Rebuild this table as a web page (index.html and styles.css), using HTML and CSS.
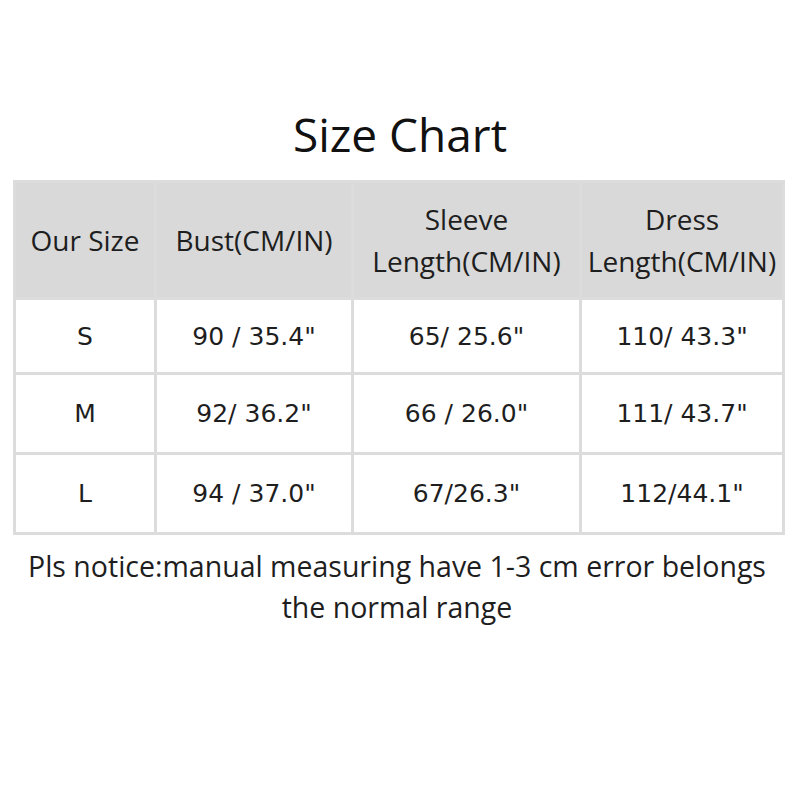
FILE: index.html
```html
<!DOCTYPE html>
<html>
<head>
<meta charset="utf-8">
<link rel="stylesheet" href="styles.css">
</head>
<body>
<div class="page">
  <h1 class="title">Size Chart</h1>
  <table class="chart">
    <colgroup>
      <col class="c1"><col class="c2"><col class="c3"><col class="c4">
    </colgroup>
    <thead>
      <tr>
        <th>Our Size</th>
        <th>Bust(CM/IN)</th>
        <th>Sleeve<br>Length(CM/IN)</th>
        <th>Dress<br>Length(CM/IN)</th>
      </tr>
    </thead>
    <tbody>
      <tr class="r1"><td>S</td><td>90 / 35.4"</td><td>65/ 25.6"</td><td>110/ 43.3"</td></tr>
      <tr class="r2"><td>M</td><td>92/ 36.2"</td><td>66 / 26.0"</td><td>111/ 43.7"</td></tr>
      <tr class="r3"><td>L</td><td>94 / 37.0"</td><td>67/26.3"</td><td>112/44.1"</td></tr>
    </tbody>
  </table>
  <p class="note">Pls notice:manual measuring have 1-3 cm error belongs<br>the normal range</p>
</div>
</body>
</html>
```
FILE: styles.css
```css
html, body {
  margin: 0;
  padding: 0;
  background: #ffffff;
}
.page {
  width: 800px;
  height: 800px;
  padding-top: 104px;
  box-sizing: border-box;
  font-family: "Open Sans", sans-serif;
  color: #1a1a1a;
}
.title {
  margin: 0;
  text-align: center;
  font-weight: 400;
  font-size: 46px;
  line-height: 60px;
  color: #111;
}
.chart {
  margin: 16px 0 0 13px;
  width: 769px;
  border-collapse: collapse;
  table-layout: fixed;
}
.c1 { width: 141px; }
.c2 { width: 197px; }
.c3 { width: 228px; }
.c4 { width: 203px; }
.chart th, .chart td {
  border: 3px solid #dcdcdc;
  text-align: center;
  padding: 0;
}
.chart th {
  background: #d9d9d9;
  font-weight: 400;
  font-size: 28px;
  line-height: 42px;
  height: 114px;
  color: #1e1e1e;
}
.chart td {
  font-family: "DejaVu Sans", Verdana, sans-serif;
  font-size: 25px;
  color: #1e1e1e;
}
.r1 td { height: 72px; }
.r2 td { height: 77px; }
.r3 td { height: 77px; }
.note {
  margin: 11px 0 0;
  padding-right: 6px;
  text-align: center;
  font-size: 28.5px;
  line-height: 41px;
  color: #1e1e1e;
}
```
